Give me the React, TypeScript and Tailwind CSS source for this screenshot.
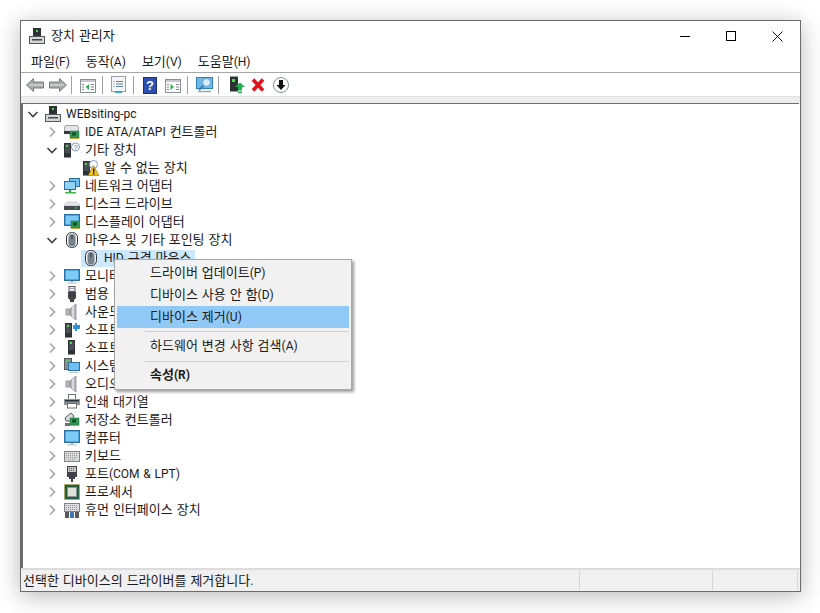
import React from 'react';

const Tower = ({ x = 4, y = 1 }: { x?: number; y?: number }) => (
  <>
    <rect x={x} y={y} width="7" height="14" fill="#2e3236" />
    <rect x={x + 1} y={y + 1} width="5" height="9" fill="#4a4f54" />
    <rect x={x + 2} y={y + 2} width="2" height="2" fill="#3fe04a" />
    <rect x={x} y={y + 14} width="7" height="1" fill="#8a8f94" />
  </>
);

const Monitor = ({ y = 2, h = 10 }: { y?: number; h?: number }) => (
  <>
    <rect x="0.5" y={y + 0.5} width="15" height={h} fill="#1f86cf" stroke="#2a6f9f" />
    <rect x="1.500" y={y + 1.5} width="13" height={h - 2} fill="#7ccaf6" />
    <rect x="7" y={y + h + 1} width="2" height="1.5" fill="#9aa5ad" />
    <rect x="3" y={y + h + 2.5} width="10" height="1" fill="#b8c0c6" />
  </>
);

const Card = ({ x = 7, y = 8 }: { x?: number; y?: number }) => (
  <>
    <rect x={x} y={y} width="9" height="7" fill="#2f9a50" stroke="#1f6a38" strokeWidth="0.5" />
    <rect x={x + 2} y={y + 1.5} width="4" height="3" fill="#174f2c" />
    <rect x={x} y={y + 7} width="9" height="1" fill="#d2a53a" />
  </>
);

const Speaker = () => (
  <>
    <path d="M2 5h4l6-5v16l-6-5H2z" fill="#b3b8bc" stroke="#7d8387" strokeWidth="0.7" />
    <path d="M9 2.500v11" stroke="#e4e6e8" strokeWidth="1.500" />
    <path d="M6 5v6" stroke="#858a8e" />
  </>
);

const Mouse = () => (
  <>
    <rect x="2.500" y="0.5" width="11" height="15" rx="5" fill="#eef0f2" stroke="#2f3338" />
    <rect x="4.500" y="2" width="7" height="12.500" rx="3.500" fill="#76838f" />
    <rect x="7.500" y="3" width="1" height="4" fill="#2f3338" />
  </>
);

const icons: Record<string, React.ReactNode> = {
  computer: (
    <>
      <rect x="4" y="0" width="8" height="9" fill="#2e3236" />
      <rect x="7" y="2" width="2" height="2" fill="#3fe04a" />
      <rect x="0.5" y="8.500" width="15" height="7" fill="#d4d6d8" stroke="#55595d" />
      <rect x="3" y="11" width="10" height="1.500" fill="#45494d" />
    </>
  ),
  ide: (
    <>
      <rect x="0.5" y="1.500" width="14" height="6" rx="2" fill="#e2e4e6" stroke="#7c8084" strokeWidth="0.7" />
      <rect x="0" y="7" width="7" height="3" fill="#33373b" />
      <Card x={6} y={7} />
    </>
  ),
  unknown: (
    <>
      <Tower x={0} y={1} />
      <circle cx="11.500" cy="5" r="4" fill="#fff" stroke="#7f9db8" />
      <text x="11.500" y="8" fontSize="7.500" textAnchor="middle" fill="#3a6ea5" fontFamily="Liberation Sans">?</text>
    </>
  ),
  warn: (
    <>
      <Tower x={0} y={1} />
      <circle cx="10.500" cy="4.500" r="4" fill="#fff" stroke="#7f9db8" />
      <path d="M10.500 5.500l5.500 10H5z" fill="#f4c21c" stroke="#8a6b10" strokeWidth="0.6" />
      <rect x="10" y="8.500" width="1.500" height="4" fill="#222" />
      <rect x="10" y="13" width="1.500" height="1.500" fill="#222" />
    </>
  ),
  network: (
    <>
      <rect x="5.500" y="0.5" width="10" height="8" fill="#6fc0f2" stroke="#2a6f9f" />
      <rect x="0.5" y="3.500" width="11" height="8" fill="#8fd3f7" stroke="#2a6f9f" />
      <rect x="5" y="12" width="2" height="2" fill="#2f8f4a" />
      <rect x="1" y="14" width="11" height="1.500" fill="#39b54a" />
    </>
  ),
  disk: (
    <>
      <path d="M3 6h10l3 3v1H0V9z" fill="#e4e6e8" stroke="#a8acb0" strokeWidth="0.5" />
      <rect x="0" y="10" width="16" height="4" fill="#474b4f" />
      <rect x="11" y="11.500" width="2" height="1" fill="#3fe04a" />
    </>
  ),
  display: (
    <>
      <rect x="0.5" y="0.5" width="15" height="11" fill="#1f86cf" stroke="#2a6f9f" />
      <rect x="1.500" y="1.500" width="13" height="9" fill="#7ccaf6" />
      <Card x={7} y={7} />
    </>
  ),
  mouse: <Mouse />,
  monitor: <Monitor y={1} h={11} />,
  usb: (
    <>
      <rect x="5" y="0.5" width="6" height="5" fill="#e8eaec" stroke="#55595d" />
      <rect x="6.500" y="2" width="1" height="1" fill="#55595d" />
      <rect x="8.500" y="2" width="1" height="1" fill="#55595d" />
      <path d="M4 6h8v6l-2 2v2H6v-2l-2-2z" fill="#3f4347" />
    </>
  ),
  speaker: <Speaker />,
  softcomp: (
    <>
      <Tower x={1} y={1} />
      <path d="M9 3h2V1h2v2h3v4h-3v2h-2V7H9z" fill="#2f93d8" />
    </>
  ),
  softdev: <Tower x={4} y={0} />,
  system: (
    <>
      <rect x="0.5" y="0.5" width="7" height="11" fill="#8a8f94" stroke="#55595d" />
      <rect x="2" y="2.500" width="4" height="1" fill="#3fe04a" />
      <rect x="4.500" y="4.500" width="11" height="8" fill="#6fc0f2" stroke="#2a6f9f" />
      <rect x="6" y="14" width="8" height="1" fill="#b8c0c6" />
    </>
  ),
  printer: (
    <>
      <rect x="4.500" y="0.5" width="7" height="5" fill="#fff" stroke="#6c7074" />
      <rect x="0" y="5" width="16" height="6" fill="#8e9397" />
      <rect x="1" y="6" width="14" height="1.500" fill="#2f3337" />
      <rect x="3.500" y="9.500" width="9" height="4.500" fill="#fff" stroke="#6c7074" />
    </>
  ),
  storage: (
    <>
      <path d="M1 6l6-5 3 3-3 5H2z" fill="#d9dbdd" stroke="#45494d" strokeWidth="0.9" />
      <rect x="1" y="11" width="6" height="3" fill="#6c7074" />
      <Card x={6} y={6} />
    </>
  ),
  computer2: <Monitor y={0} h={12} />,
  keyboard: (
    <>
      <rect x="0.5" y="3.500" width="15" height="10" fill="#d9dbdd" stroke="#7d8387" />
      <path d="M2 5.500h12M2 7.500h12M2 9.500h12M4 11.500h8" stroke="#8f9498" strokeDasharray="1 1" />
    </>
  ),
  port: (
    <>
      <rect x="3.500" y="0.5" width="9" height="6" fill="#c8cbce" stroke="#3b3f43" />
      <path d="M5 2.500h6M5 4.500h6" stroke="#55595d" strokeDasharray="1 1" />
      <path d="M3 7h10v4h-2v2h-2v3H7v-3H5v-2H3z" fill="#3f4347" />
    </>
  ),
  cpu: (
    <>
      <rect x="0.5" y="0.5" width="15" height="15" fill="#2c6e4a" stroke="#b89a3a" strokeDasharray="1 1" />
      <rect x="1.500" y="1.500" width="13" height="13" fill="#1f5b3c" />
      <rect x="3.500" y="3.500" width="9" height="9" fill="#dfe2da" stroke="#8f9498" />
    </>
  ),
  hid: (
    <>
      <rect x="0.5" y="1.500" width="15" height="8" fill="#dcdee0" stroke="#7d8387" />
      <path d="M2 3.500h12M2 5.500h12M2 7.500h12" stroke="#8f9498" strokeDasharray="1 1" />
      <rect x="1" y="10" width="4" height="6" fill="#55595d" />
      <rect x="6" y="10" width="4" height="6" fill="#3a78b5" />
      <rect x="11" y="10" width="4" height="6" fill="#55595d" />
    </>
  ),
};

const Ico = ({ name }: { name: string }) => (
  <svg width="16" height="16" viewBox="0 0 16 16" className="shrink-0">
    {icons[name]}
  </svg>
);

const Chevron = ({ open }: { open?: boolean }) => (
  <svg width="14" height="14" viewBox="0 0 14 14" className="shrink-0">
    {open ? (
      <path d="M2.500 5l4.500 4.500L11.500 5" fill="none" stroke="#404040" strokeWidth="1.600" />
    ) : (
      <path d="M5 2.500L9.500 7 5 11.500" fill="none" stroke="#a6a6a6" strokeWidth="1.600" />
    )}
  </svg>
);

// latin runs sit one pixel smaller than the hangul around them
const Label = ({ text }: { text: string }) => (
  <span className="whitespace-nowrap">
    {text.split(/([!-~](?:[ -~]*[!-~])?)/).map((part, i) =>
      i % 2 ? (
        <span key={i} className="text-[12px]">
          {part}
        </span>
      ) : (
        part
      ),
    )}
  </span>
);

type Row = { level: 0 | 1 | 2; icon: string; label: string; open?: boolean; selected?: boolean };

const rows: Row[] = [
  { level: 0, icon: 'computer', label: 'WEBsiting-pc', open: true },
  { level: 1, icon: 'ide', label: 'IDE ATA/ATAPI 컨트롤러' },
  { level: 1, icon: 'unknown', label: '기타 장치', open: true },
  { level: 2, icon: 'warn', label: '알 수 없는 장치' },
  { level: 1, icon: 'network', label: '네트워크 어댑터' },
  { level: 1, icon: 'disk', label: '디스크 드라이브' },
  { level: 1, icon: 'display', label: '디스플레이 어댑터' },
  { level: 1, icon: 'mouse', label: '마우스 및 기타 포인팅 장치', open: true },
  { level: 2, icon: 'mouse', label: 'HID 규격 마우스', selected: true },
  { level: 1, icon: 'monitor', label: '모니터' },
  { level: 1, icon: 'usb', label: '범용 직렬 버스 컨트롤러' },
  { level: 1, icon: 'speaker', label: '사운드, 비디오 및 게임 컨트롤러' },
  { level: 1, icon: 'softcomp', label: '소프트웨어 구성 요소' },
  { level: 1, icon: 'softdev', label: '소프트웨어 장치' },
  { level: 1, icon: 'system', label: '시스템 장치' },
  { level: 1, icon: 'speaker', label: '오디오 입력 및 출력' },
  { level: 1, icon: 'printer', label: '인쇄 대기열' },
  { level: 1, icon: 'storage', label: '저장소 컨트롤러' },
  { level: 1, icon: 'computer2', label: '컴퓨터' },
  { level: 1, icon: 'keyboard', label: '키보드' },
  { level: 1, icon: 'port', label: '포트(COM & LPT)' },
  { level: 1, icon: 'cpu', label: '프로세서' },
  { level: 1, icon: 'hid', label: '휴먼 인터페이스 장치' },
];

const indent = { 0: 'pl-[3px]', 1: 'pl-[22px]', 2: 'pl-[41px]' };

const Sep = ({ className }: { className: string }) => <div className={`w-px h-[18px] bg-[#a0a0a0] ${className}`} />;

const Toolbar = () => (
  <div className="flex items-center h-[23px] pl-[4px] pt-px shrink-0">
    <svg width="20" height="16" viewBox="0 0 20 16">
      <path d="M1.500 8l7-6.500V5h10v6h-10v3.500z" fill="#a8aaac" stroke="#7a7c7e" />
      <path d="M4 8h14" stroke="#c6c8ca" strokeWidth="2" />
    </svg>
    <svg width="20" height="16" viewBox="0 0 20 16" className="ml-[3px]">
      <path d="M18.500 8l-7-6.500V5h-10v6h10v3.500z" fill="#a8aaac" stroke="#7a7c7e" />
      <path d="M2 8h14" stroke="#c6c8ca" strokeWidth="2" />
    </svg>
    <Sep className="ml-[3px]" />
    <svg width="18" height="16" viewBox="0 0 18 16" className="ml-[7px] mt-[2px]">
      <rect x="1.500" y="1.500" width="15" height="13" fill="#fff" stroke="#8a8f94" />
      <rect x="2" y="2" width="14" height="2" fill="#c4c8cc" />
      <path d="M10 6L6.500 9l3.500 3z" fill="#30b050" />
      <path d="M12 6.500h3M12 9h3M12 11.500h3M3 6.500h2M3 9h2M3 11.500h2" stroke="#7d8387" />
    </svg>
    <Sep className="ml-[5px]" />
    <svg width="18" height="18" viewBox="0 0 18 18" className="ml-[7px]">
      <rect x="1.500" y="0.5" width="14" height="15" fill="#f4f5f6" stroke="#9a9fa4" />
      <path d="M6 5.500h7M6 8h7M6 10.500h7M3.500 5.500h1M3.500 8h1M3.500 10.500h1" stroke="#5f7f9f" />
      <rect x="5" y="15" width="7" height="2" fill="#36a3e0" />
    </svg>
    <Sep className="ml-[5px]" />
    <svg width="14" height="17" viewBox="0 0 14 17" className="ml-[9px]">
      <rect x="0.500" y="0.500" width="13" height="16" fill="#2d4fb0" stroke="#1c2f78" />
      <text x="7" y="13" fontSize="13" fontWeight="700" textAnchor="middle" fill="#fff" fontFamily="Liberation Sans">?</text>
    </svg>
    <svg width="18" height="16" viewBox="0 0 18 16" className="ml-[7px] mt-[2px]">
      <rect x="1.500" y="1.500" width="15" height="13" fill="#fff" stroke="#8a8f94" />
      <rect x="2" y="2" width="14" height="2" fill="#c4c8cc" />
      <path d="M6.500 6L10 9l-3.500 3z" fill="#30b050" />
      <path d="M12 6.500h3M12 9h3M12 11.500h3M3 6.500h2M3 9h2M3 11.500h2" stroke="#7d8387" />
    </svg>
    <Sep className="ml-[5px]" />
    <svg width="18" height="16" viewBox="0 0 18 16" className="ml-[8px]">
      <rect x="0.500" y="0.500" width="16" height="11" fill="#6fb8e8" stroke="#2f7fb8" />
      <circle cx="10.500" cy="5.500" r="4" fill="#d5edfb" stroke="#5f9fc8" />
      <path d="M7.500 8.500L3 13" stroke="#3b7fae" strokeWidth="2" />
      <path d="M2 14.500h13" stroke="#9aa5ad" strokeWidth="1.500" />
    </svg>
    <Sep className="ml-[4px]" />
    <svg width="16" height="18" viewBox="0 0 16 18" className="ml-[10px]">
      <rect x="1" y="0.500" width="8" height="15" fill="#2e3236" />
      <rect x="3" y="3" width="3" height="3" fill="#3fe04a" />
      <path d="M11 6.500l5 4.500h-3v3.500H9V11H6z" fill="#20b050" />
      <rect x="9" y="15.500" width="4" height="1.500" fill="#20b050" />
    </svg>
    <svg width="16" height="16" viewBox="0 0 16 16" className="ml-[5px]">
      <path d="M3 2.500l10 11M13 2.500l-10 11" stroke="#e0141c" strokeWidth="3.500" />
    </svg>
    <svg width="18" height="18" viewBox="0 0 18 18" className="ml-[6px]">
      <circle cx="9" cy="9" r="7.500" fill="#fff" stroke="#8a8f94" />
      <path d="M7 4h4v5h2.500L9 14 4.500 9H7z" fill="#111" />
    </svg>
  </div>
);

const menu = ['파일(F)', '동작(A)', '보기(V)', '도움말(H)'];

export default function App() {
  return (
    <div className="w-[820px] h-[613px] bg-white pl-[20px] pt-[20px] overflow-hidden font-['Roboto','Noto_Sans_CJK_KR',sans-serif] text-[13px] [word-spacing:0.75px] text-[#1a1a1a]">
      <div className="relative w-[781px] h-[572px] bg-white border border-[#6b6b6b] shadow-[0_4px_22px_rgba(0,0,0,0.28)] flex flex-col">
        <div className="flex items-center h-[30px] shrink-0">
          <div className="ml-[8px]">
            <Ico name="computer" />
          </div>
          <span className="ml-[6px]">장치 관리자</span>
          <div className="ml-auto flex items-center">
            <div className="w-[46px] flex justify-center">
              <div className="w-[10px] h-px bg-black" />
            </div>
            <div className="w-[46px] flex justify-center">
              <div className="w-[10px] h-[10px] border border-black" />
            </div>
            <div className="w-[46px] flex justify-center">
              <svg width="11" height="11" viewBox="0 0 11 11">
                <path d="M0.500 0.500l10 10M10.500 0.500l-10 10" stroke="#111" />
              </svg>
            </div>
          </div>
        </div>
        <div className="flex items-center h-[22px] pl-[10px] gap-[16px] border-b border-[#a8a8a8] shrink-0">
          {menu.map((m) => (
            <Label key={m} text={m} />
          ))}
        </div>
        <Toolbar />
        <div className="h-[7px] bg-[#eeeeee] border-t border-[#e2e2e2] shrink-0" />
        <div className="flex-1 min-h-0 border-t border-l-2 border-[#6e6e6e] border-r-0 mr-px pt-px">
          {rows.map((r) => (
            <div key={r.label} className={`flex items-center h-[18px] ${indent[r.level]}`}>
              {r.level < 2 || r.open ? <Chevron open={r.open} /> : <div className="w-[14px]" />}
              <div className={`flex items-center ml-[3px] pl-[2px] h-[17px] ${r.selected ? 'bg-[#cce8ff] pr-[4px]' : ''}`}>
                <Ico name={r.icon} />
                <span className="ml-[5px]">
                  <Label text={r.label} />
                </span>
              </div>
            </div>
          ))}
        </div>
        <div className="flex h-[23px] bg-[#f0f0f0] border-t-2 border-[#dcdcdc] shrink-0">
          <div className="w-[558px] pl-[2px] flex items-center">
            <Label text="선택한 디바이스의 드라이버를 제거합니다." />
          </div>
          <div className="w-[133px] border-l border-[#d4d4d4] my-px" />
          <div className="w-[85px] border-l border-[#d4d4d4] my-px" />
          <div className="flex-1 border-l border-[#d4d4d4] my-px" />
        </div>

        <div className="absolute left-[93px] top-[238px] w-[238px] h-[131px] bg-[#f1f1f1] border border-[#a8a8a8] shadow-[2px_2px_3px_rgba(0,0,0,0.4)] p-[2px] z-10">
          <div className="h-[22px] pl-[33px] flex items-center">
            <Label text="드라이버 업데이트(P)" />
          </div>
          <div className="h-[22px] pl-[33px] flex items-center">
            <Label text="디바이스 사용 안 함(D)" />
          </div>
          <div className="h-[22px] pl-[33px] flex items-center bg-[#90c8f6]">
            <Label text="디바이스 제거(U)" />
          </div>
          <div className="h-px bg-[#d0d0d0] ml-[28px] mt-[3px] mb-[3px]" />
          <div className="h-[22px] pl-[33px] flex items-center">
            <Label text="하드웨어 변경 사항 검색(A)" />
          </div>
          <div className="h-px bg-[#d0d0d0] ml-[28px] mt-[4px] mb-[2px]" />
          <div className="h-[22px] pl-[33px] flex items-center font-bold">
            <Label text="속성(R)" />
          </div>
        </div>
      </div>
    </div>
  );
}
